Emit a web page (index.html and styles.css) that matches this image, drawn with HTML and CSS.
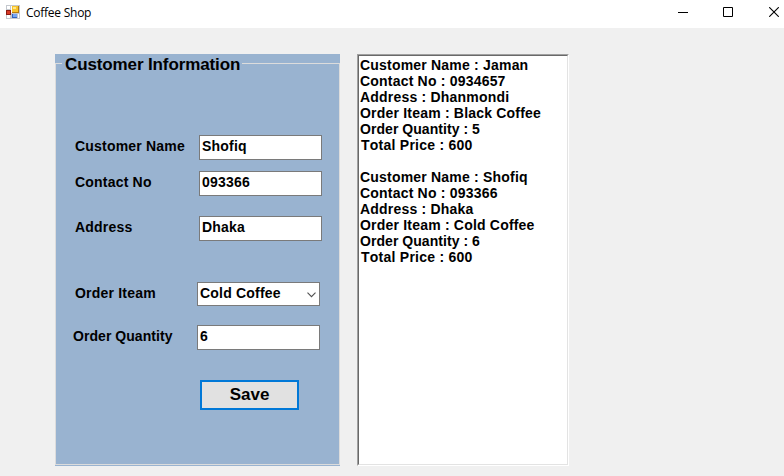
FILE: index.html
```html
<!DOCTYPE html>
<html lang="en">
<head>
<meta charset="utf-8">
<title>Coffee Shop</title>
<link rel="stylesheet" href="styles.css">
</head>
<body>
<header class="titlebar">
  <svg class="app-icon" width="14" height="14" viewBox="0 0 14 14" shape-rendering="crispEdges">
    <path fill="#c4c8ce" d="M0 0h14v14H0z"/>
    <path fill="#fff" d="M1 1h3v3H1zM1 10h3v3H1zM5 1h1v7H5zM12 9h1v4h-1z"/>
    <path fill="#8c1b12" d="M0 5h5v5H0z"/>
    <path fill="#d93a26" d="M1 6h3v3H1z"/>
    <path fill="#b57b10" d="M6 1h7v7H6z"/>
    <path fill="#f7c42c" d="M6 1h6v6H6z"/>
    <path fill="#ffe78a" d="M7 2h3v2H7z"/>
    <path fill="#2f62bf" d="M6 9h5v4H6z"/>
    <path fill="#76a5f2" d="M7 9h4v3H7z"/>
  </svg>
  <span class="title">Coffee Shop</span>
  <div class="controls">
    <svg width="10" height="10" viewBox="0 0 10 10"><path fill="#000" d="M0 5h10v1H0z"/></svg>
    <svg width="10" height="10" viewBox="0 0 10 10"><path fill="none" stroke="#000" d="M.5.5h9v9h-9z"/></svg>
    <svg class="close" width="10" height="10" viewBox="0 0 10 10"><path fill="none" stroke="#000" stroke-width="1.1" d="M.2.2l9.6 9.6M9.8.2L.2 9.8"/></svg>
  </div>
</header>
<main class="form">
  <section class="group">
    <div class="frame">
      <h1 class="legend"><span>Customer Information</span></h1>
      <div class="row name"><label>Customer Name</label><div class="box">Shofiq</div></div>
      <div class="row contact"><label>Contact No</label><div class="box">093366</div></div>
      <div class="row address"><label>Address</label><div class="box">Dhaka</div></div>
      <div class="row item"><label>Order Iteam</label><div class="box combo">Cold Coffee
        <svg width="9" height="6" viewBox="0 0 9 6"><path fill="none" stroke="#505050" stroke-width="1.1" d="M.5.7l4 4 4-4"/></svg></div></div>
      <div class="row quantity"><label>Order Quantity</label><div class="box">6</div></div>
      <button class="save">Save</button>
    </div>
  </section>
  <section class="list">
    <div class="list-inner">
      <p>Customer Name : Jaman</p>
      <p>Contact No : 0934657</p>
      <p>Address : Dhanmondi</p>
      <p>Order Iteam : Black Coffee</p>
      <p class="tight">Order Quantity : 5</p>
      <p class="wide">Total Price : 600</p>
      <p></p>
      <p>Customer Name : Shofiq</p>
      <p>Contact No : 093366</p>
      <p>Address : Dhaka</p>
      <p>Order Iteam : Cold Coffee</p>
      <p class="tight">Order Quantity : 6</p>
      <p class="wide">Total Price : 600</p>
    </div>
  </section>
</main>
</body>
</html>
```
FILE: styles.css
```css
* { box-sizing: border-box; }

body {
  margin: 0;
  height: 476px;
  overflow: hidden;
  background: #f0f0f0;
  color: #000;
  font: bold 14px/16px "Liberation Sans", Arial, sans-serif;
  font-kerning: none;
  letter-spacing: 0.2px;
}

.titlebar {
  display: flex;
  height: 28px;
  padding-left: 6px;
  background: #fff;
}

.app-icon { margin-top: 5px; }

.title {
  margin: 5px 0 0 6px;
  font: 12px/16px "Open Sans", "Noto Sans", sans-serif;
  letter-spacing: -0.25px;
}

.controls {
  display: flex;
  gap: 35px;
  margin: 7px 5px 0 auto;
}

.controls svg { display: block; }

.controls .close { margin-left: 1px; }

.form {
  display: flex;
  gap: 17px;
  padding: 26px 0 0 55px;
}

.group {
  width: 285px;
  height: 412px;
  padding: 9px 0 1px;
  background: #99b3d0;
}

.frame {
  height: 402px;
  border: 1px solid #dcdcdc;
}

.legend {
  width: 180px;
  height: 20px;
  margin: -9px 0 0 6px;
  padding-left: 3px;
  background: #99b3d0;
  font-size: 17px;
  line-height: 19px;
  letter-spacing: -0.12px;
  white-space: nowrap;
}

.row {
  display: grid;
  grid-template-columns: 124px 123px;
  margin-left: 19px;
}

.row label { padding-top: 3px; }

.name { margin-top: 60px; }
.contact { margin-top: 11px; }
.address { margin-top: 20px; }

.item {
  grid-template-columns: 122px 123px;
  margin-top: 41px;
}

.quantity {
  grid-template-columns: 124px 123px;
  margin: 19px 0 0 17px;
}

.quantity label,
.list .tight { letter-spacing: 0.05px; }

.list .wide {
  padding-left: 1px;
  letter-spacing: 0.25px;
}

.box {
  height: 25px;
  padding: 2px;
  border: 1px solid #7a7a7a;
  background: #fff;
}

.combo {
  display: flex;
  justify-content: space-between;
  height: 24px;
}

.combo svg { margin: 7px 1px 0 0; }

.save {
  display: block;
  width: 99px;
  height: 30px;
  margin: 30px 0 0 144px;
  padding: 0;
  border: 2px solid #0078d7;
  background: #e1e1e1;
  color: #000;
  font: bold 17px/26px "Liberation Sans", Arial, sans-serif;
}

.list {
  width: 212px;
  height: 412px;
  border: 1px solid;
  border-color: #a0a0a0 #fff #fff #a0a0a0;
}

.list-inner {
  height: 100%;
  padding: 1px;
  border: 1px solid;
  border-color: #696969 #e3e3e3 #e3e3e3 #696969;
  background: #fff;
}

.list p {
  height: 16px;
  margin: 0;
  white-space: nowrap;
}
```
